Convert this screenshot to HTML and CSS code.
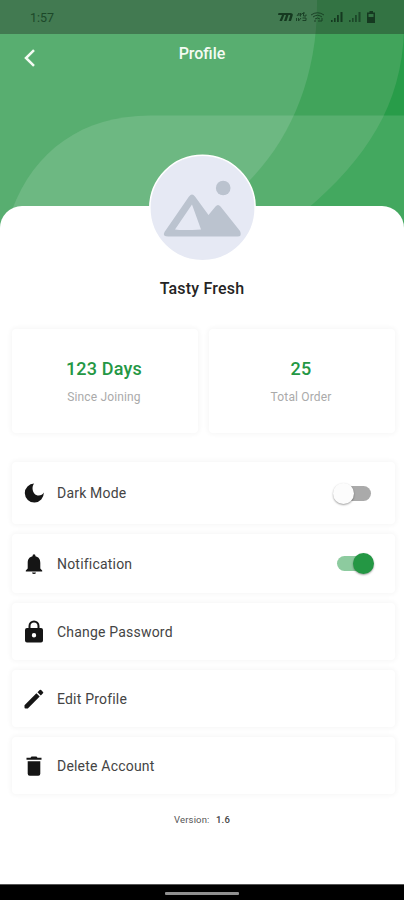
FILE: index.html
```html
<!DOCTYPE html>
<html lang="en">
<head>
<meta charset="utf-8">
<title>Profile</title>
<link rel="stylesheet" href="styles.css">
</head>
<body>
<div class="screen">
  <header class="hero">
    <svg class="hero-art" viewBox="0 0 404 240" aria-hidden="true">
      <rect width="404" height="240" fill="#289c49"/>
      <path d="M0 0H404V30C402 105 366 159 306 210L280 240H0Z" fill="#41a45b"/>
      <path d="M0 0H317C318 74 292 137 250 180L190 240H0Z" fill="#58ae70"/>
      <path d="M12 210C34 151 82 115.500 150 115.500H404V240H12Z" fill="#fff" fill-opacity=".125"/>
    </svg>
    <div class="status">
      <span class="clock">1:57</span>
      <svg class="status-icons" width="102" height="16" viewBox="0 0 102 16" fill="#153920" aria-hidden="true">
        <path d="M1.500 4H13Q16.500 4 15.700 6.500L14 12H11.500L13.300 6H11.500L9.500 12H7L9 6H7.300L5 12H2.500L5 6H1Z"/>
        <g fill="none" stroke="#153920" stroke-width="1" opacity=".85">
          <path d="M20 7L22 4V7M23.500 4V7.500M24 5.500L27 3.500M28 4H26.500V7H29V5.500M19.500 9V12M21.500 9V12L24 9M25.500 9H29M25.500 11.500H29V9"/>
          <path d="M34 6Q40.500 1.500 47 6M36 8Q40.500 4.500 45 8M38 10Q40.500 8 43 10M37 12H39M41 12H45V9"/>
        </g>
        <path d="M54 11h1.600v2H54zM57 9h1.600v4H57zM60 6h1.800v7H60zM63.500 3h2v10h-2z"/>
        <path d="M72 11h1.600v2H72zM75 9h1.600v4H75zM78 6h1.800v7H78zM81.500 3h2v10h-2z" opacity=".75"/>
        <path d="M92.500 2H96V3.500H98V14H90V3.500H92.500ZM91.500 5V8H96.500V5Z" fill-rule="evenodd"/>
      </svg>
    </div>
    <div class="appbar">
      <svg class="back" width="12" height="18" viewBox="0 0 12 18" aria-hidden="true"><path d="M10 1.200L2 9L10 16.800" fill="none" stroke="#f4fbf3" stroke-width="2.500"/></svg>
      <h1>Profile</h1>
    </div>
  </header>
  <main class="sheet">
    <div class="avatar">
      <svg width="108" height="108" viewBox="0 0 108 108" aria-hidden="true">
        <circle cx="54" cy="54" r="52.700" fill="#e6e9f4" stroke="#fff" stroke-width="1.600"/>
        <g fill="#bbc3cf">
          <circle cx="74.700" cy="34" r="7.300"/>
          <path fill-rule="evenodd" d="M40.500 42.500Q43.500 38.500 46.500 42.500L60 61L67 52.500Q69.500 49.500 72 52.500L91.500 77Q94 82.500 89 82.500H20Q13.500 82.500 16 78ZM43.500 50.500L26.500 75.500Q34 76.700 52.500 75.500Z"/>
        </g>
      </svg>
    </div>
    <h2 class="name">Tasty Fresh</h2>
    <section class="stats">
      <div class="card stat"><strong>123 Days</strong><span>Since Joining</span></div>
      <div class="card stat"><strong>25</strong><span>Total Order</span></div>
    </section>
    <section class="menu">
      <div class="card row row-dark">
        <svg class="icon" viewBox="0 0 20 20"><path d="M10.200 .500A9.500 9.500 0 1 0 19.800 9.600C18.200 13 12.800 13.600 10.300 10.500C8 7.600 7.900 3.300 10.200 .500Z"/></svg>
        <span>Dark Mode</span><i class="switch"></i>
      </div>
      <div class="card row row-notify">
        <svg class="icon" viewBox="0 0 20 20"><path d="M8.500 2.200Q8.500 .200 10 .200T11.500 2.200C15 3 16.300 5.500 16.300 9V14.500L18.200 16.500V17.500H1.800V16.500L3.700 14.500V9C3.700 5.500 5 3 8.500 2.200ZM8 18.500H12Q11.800 20 10 20T8 18.500Z"/></svg>
        <span>Notification</span><i class="switch switch-on"></i>
      </div>
      <div class="card row row-password">
        <svg class="icon icon-lock" viewBox="0 0 20 23"><path fill-rule="evenodd" d="M4.500 8V6A5.500 5.500 0 0 1 15.500 6V8H17Q19 8 19 10V20.500Q19 22.500 17 22.500H3Q1 22.500 1 20.500V10Q1 8 3 8ZM6.500 8H13.500V6A3.500 3.500 0 0 0 6.500 6ZM10 13.100A2.200 2.200 0 1 0 10 17.500A2.200 2.200 0 1 0 10 13.100Z"/></svg>
        <span>Change Password</span>
      </div>
      <div class="card row row-edit">
        <svg class="icon" viewBox="0 0 20 20"><path d="M.500 16.200L12.400 4.300L15.700 7.600L3.800 19.500H1.500Q.500 19.500 .500 18.500ZM13.500 3.200L15.700 1Q16.400 .300 17.100 1L19 2.900Q19.700 3.600 19 4.300L16.800 6.500Z"/></svg>
        <span>Edit Profile</span>
      </div>
      <div class="card row row-delete">
        <svg class="icon" viewBox="0 0 20 20"><path d="M3.700 5.300H16.300V17.700Q16.300 19.700 14.300 19.700H5.700Q3.700 19.700 3.700 17.700ZM2.500 1.700H6.500L7.500 .500H12.500L13.500 1.700H17.500V3.700H2.500Z"/></svg>
        <span>Delete Account</span>
      </div>
    </section>
    <p class="version">Version: <b>1.6</b></p>
  </main>
  <footer class="navbar"><i></i></footer>
</div>
</body>
</html>
```
FILE: styles.css
```css
* { box-sizing: border-box; }
body { margin: 0; background: #fff; font-family: Roboto, "Liberation Sans", sans-serif; }
h1, h2, p { margin: 0; font-weight: 400; }
.screen { width: 404px; height: 900px; display: flex; flex-direction: column; overflow: hidden; }
.hero { position: relative; height: 206px; flex: none; color: #f4fbf3; }
.hero-art { position: absolute; top: 0; left: 0; width: 404px; height: 240px; }
.status { position: relative; display: flex; justify-content: space-between; align-items: center; height: 34px; padding: 1px 25px 0 30px; background: rgba(27, 25, 22, .35); }
.clock { color: #1c4829; font-size: 12.5px; }
.status-icons { display: block; margin-top: -2px; }
.appbar { position: relative; display: grid; grid-template-columns: 60px 1fr 60px; height: 50px; }
.back { margin: 15px 0 0 24px; }
.appbar h1 { margin-top: 10px; text-align: center; font-size: 16px; line-height: 20px; font-weight: 500; }
.sheet { position: relative; flex: 1; display: flex; flex-direction: column; background: #fff; border-radius: 22px 22px 0 0; }
.avatar { height: 108px; width: 108px; margin: -52px auto 0; transform: translateX(.5px); }
.avatar svg { display: block; }
.name { margin-top: 17px; text-align: center; font-size: 16px; line-height: 20px; font-weight: 500; color: #242424; letter-spacing: .2px; }
.card { background: #fff; border-radius: 4px; box-shadow: 0 0 4px 2px rgba(0, 0, 0, .03); }
.stats { display: grid; grid-template-columns: 1fr 1fr; gap: 11px; margin: 30px 9px 0 12px; }
.stat { height: 104px; padding: 28px 2px 0 0; display: flex; flex-direction: column; align-items: center; }
.stat strong { font-size: 18px; line-height: 24px; font-weight: 500; color: #249744; letter-spacing: .2px; }
.stat span { margin-top: 7px; font-size: 12px; line-height: 18px; color: #aaa; letter-spacing: .15px; }
.menu { display: flex; flex-direction: column; gap: 10px; margin: 29px 9px 0 12px; }
.row { display: flex; align-items: center; height: 57px; padding: 0 22px 0 12px; font-size: 14px; color: #444; letter-spacing: .2px; }
.row-dark { height: 62px; }
.row-notify { height: 59px; }
.icon { width: 20px; height: 20px; margin-right: 13px; fill: #151515; }
.icon-lock { height: 23px; }
.switch { position: relative; width: 36px; height: 15px; margin-left: auto; border-radius: 8px; background: #aaa; }
.row-dark .switch { margin-right: 2px; }
.switch::after { content: ""; position: absolute; left: -2px; top: -3px; width: 21px; height: 21px; border-radius: 50%; background: #fcfcfc; box-shadow: 0 1px 2px rgba(0, 0, 0, .38); }
.switch-on { background: #8dcb9f; }
.switch-on::after { left: 16px; background: #249744; }
.version { margin-top: 19px; text-align: center; font-size: 9.5px; line-height: 14px; color: #555; letter-spacing: .15px; }
.version b { margin-left: 4px; font-weight: 500; color: #444; }
.navbar { height: 16px; flex: none; display: flex; justify-content: center; padding-top: 7px; background: #000; border-top: 1px solid #555; }
.navbar i { width: 74px; height: 3px; border-radius: 1px; background: #909090; }
```
